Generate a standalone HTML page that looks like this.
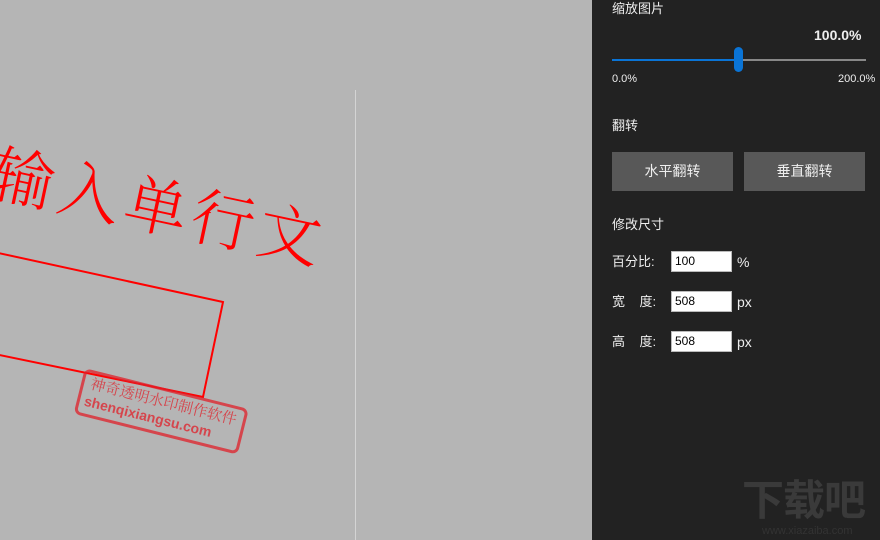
<!DOCTYPE html>
<html><head><meta charset="utf-8"><style>
body{margin:0;width:880px;height:540px;overflow:hidden;background:#b5b5b5;font-family:"Liberation Sans","Noto Sans CJK SC",sans-serif;position:relative}
#panel{position:absolute;left:592px;top:0;width:288px;height:540px;background:#222;color:#eee;font-size:13px}
.a{position:absolute}
.btn{position:absolute;top:152px;width:121px;height:39px;background:#585858;color:#eee;font-size:14px;line-height:39px;text-align:center}
.inp{position:absolute;left:79px;background:#fff;border:1px solid #bbb;color:#000;font-size:12px;line-height:19px;padding-left:3px;box-sizing:border-box;width:61px;height:21px}
.l{position:absolute;left:20px;line-height:20px}
.u{position:absolute;left:145px;font-size:14px;line-height:20px}
</style></head><body>
<svg class="a" style="left:0;top:0" width="592" height="540">
<line x1="355.5" y1="90" x2="355.5" y2="540" stroke="#d4d4d4" stroke-width="1"/>
<text x="0" y="0" transform="translate(-12,194) rotate(12)" font-family="Noto Serif CJK SC,serif" font-size="63" font-weight="300" fill="#f00" letter-spacing="5">输入单行文</text>
<polygon points="-20,249 223,302 203,397 -20,351" fill="none" stroke="#f00" stroke-width="2"/>
<g transform="translate(86,370) rotate(14)" opacity="0.75">
<rect x="0" y="0" width="166" height="44" rx="5" fill="none" stroke="#e0202a" stroke-width="3"/>
<text x="8" y="17" font-family="Noto Serif CJK SC,serif" font-size="15" fill="#e0202a">神奇透明水印制作软件</text>
<text x="6" y="35" font-size="14" font-weight="bold" fill="#e0202a">shenqixiangsu.com</text>
</g>
</svg>
<div id="panel">
<div class="a" style="left:20px;top:-2px">缩放图片</div>
<div class="a" style="left:222px;top:27px;font-weight:bold;font-size:14px">100.0%</div>
<div class="a" style="left:20px;top:59px;width:127px;height:2px;background:#0a74d6"></div>
<div class="a" style="left:147px;top:59px;width:127px;height:2px;background:#888"></div>
<div class="a" style="left:142px;top:47px;width:9px;height:25px;border-radius:5px;background:#0a74d6"></div>
<div class="a" style="left:20px;top:73px;font-size:11px">0.0%</div>
<div class="a" style="left:246px;top:73px;font-size:11px">200.0%</div>
<div class="a" style="left:20px;top:115px">翻转</div>
<div class="btn" style="left:20px">水平翻转</div>
<div class="btn" style="left:152px">垂直翻转</div>
<div class="a" style="left:20px;top:214px">修改尺寸</div>
<div class="l" style="top:252px">百分比:</div><div class="inp" style="top:251px">100</div><div class="u" style="top:252px">%</div>
<div class="l" style="top:292px">宽&nbsp;&nbsp;&nbsp;&nbsp;度:</div><div class="inp" style="top:291px">508</div><div class="u" style="top:292px">px</div>
<div class="l" style="top:332px">高&nbsp;&nbsp;&nbsp;&nbsp;度:</div><div class="inp" style="top:331px">508</div><div class="u" style="top:332px">px</div>
<div class="a" style="left:150px;top:478px;font-size:42px;line-height:46px;font-weight:bold;color:#3a3a3a;letter-spacing:-1px">下载吧</div>
<div class="a" style="left:170px;top:525px;font-size:11px;color:#333">www.xiazaiba.com</div>
</div>
</body></html>
